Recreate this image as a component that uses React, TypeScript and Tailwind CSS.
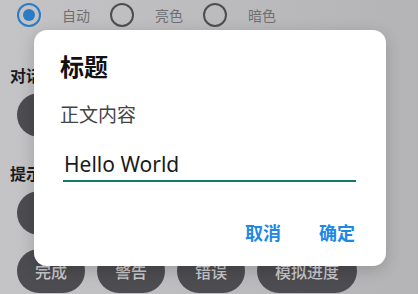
import React from 'react'

const cjk = { fontFamily: '"Noto Sans CJK SC", "Noto Sans", sans-serif' }

function Radio({ checked, label }: { checked?: boolean; label: string }) {
  return (
    <div className="flex items-center">
      {checked ? (
        <span className="w-[24px] h-[24px] rounded-full border-[2.5px] border-[#2b7cc4] flex items-center justify-center">
          <span className="w-[12px] h-[12px] rounded-full bg-[#2b7cc4]" />
        </span>
      ) : (
        <span className="w-[24px] h-[24px] rounded-full border-[2.5px] border-[#4e4e50]" />
      )}
      <span className="ml-[21px] mr-[20px] text-[14px] leading-[20px] text-[#6f6f71]">{label}</span>
    </div>
  )
}

function Pill({ label }: { label: string }) {
  return (
    <button className="h-[44px] px-[18px] rounded-full bg-[#4c4c51] text-[#c8c8ca] text-[16px] font-medium whitespace-nowrap">
      {label}
    </button>
  )
}

export default function App() {
  return (
    <div
      className="relative w-[418px] h-[294px] overflow-hidden bg-gradient-to-r from-[#c4c4c6] to-[#b4b4b6]"
      style={cjk}
    >
      {/* Background page */}
      <div className="flex items-center pt-[3px] pl-[17px]">
        <Radio checked label="自动" />
        <Radio label="亮色" />
        <Radio label="暗色" />
      </div>

      <h2 className="mt-[37px] pl-[10px] text-[16px] leading-[22px] font-bold text-[#1c1c1e]">对话框</h2>
      <div className="mt-[7px] pl-[17px] flex gap-[12px]">
        <Pill label="基础" />
        <Pill label="输入框" />
        <Pill label="选择" />
        <Pill label="自定义" />
      </div>

      <h2 className="mt-[25px] pl-[10px] text-[16px] leading-[22px] font-bold text-[#1c1c1e]">提示框</h2>
      <div className="mt-[7px] pl-[17px] flex flex-col gap-[14px]">
        <div className="flex gap-[12px]">
          <Pill label="文本" />
          <Pill label="加载中" />
          <Pill label="信息" />
        </div>
        <div className="flex gap-[12px]">
          <Pill label="完成" />
          <Pill label="警告" />
          <Pill label="错误" />
          <Pill label="模拟进度" />
        </div>
      </div>

      {/* Dialog */}
      <div className="absolute left-[34px] top-[30px] w-[352px] h-[236px] rounded-[13px] bg-white shadow-[0_4px_16px_rgba(0,0,0,0.18)] pt-[20px]">
        <h1 className="pl-[26px] text-[24px] leading-[32px] font-bold text-[#111111]">标题</h1>
        <p className="mt-[19px] pl-[26px] text-[19px] leading-[26px] text-[#444444]">正文内容</p>
        <div className="mt-[23px] ml-[29px] mr-[30px] border-b-2 border-[#13796b]">
          <div
            className="pl-px text-[21px] leading-[28px] text-[#1a1a1a] mb-[2px]"
            style={{ fontFamily: '"Noto Sans", sans-serif' }}
          >
            Hello World
          </div>
        </div>
        <div className="mt-[38px] pr-[31px] flex justify-end gap-[38px]">
          <button className="text-[18px] leading-[24px] font-bold text-[#1e88e5]">取消</button>
          <button className="text-[18px] leading-[24px] font-bold text-[#1e88e5]">确定</button>
        </div>
      </div>
    </div>
  )
}
